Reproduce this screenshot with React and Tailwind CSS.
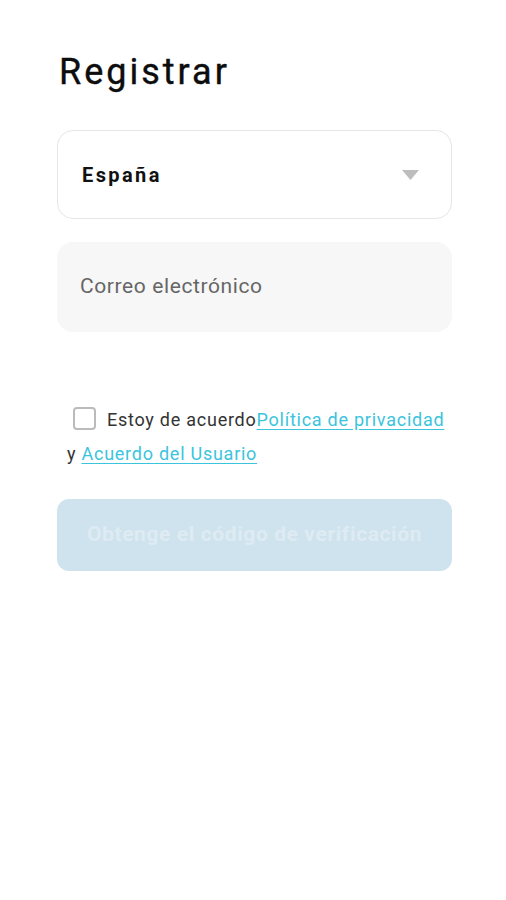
export default function App() {
  return (
    <div className="min-h-[900px] w-[506px] bg-white" style={{ fontFamily: "Roboto, 'Noto Sans', sans-serif" }}>
      <div className="pl-[57px] pr-[54px] pt-[50px]">
        <h1 className="text-[36px] leading-[44px] font-normal tracking-[3px] text-[#0d0d0d] pl-[2px] [-webkit-text-stroke:0.4px_#0d0d0d]">Registrar</h1>
        <div className="mt-[36px] h-[89px] rounded-[16px] border border-[#e6e6e6] flex items-center justify-between pl-[24px] pr-[32px]">
          <span className="text-[20px] font-bold tracking-[2.4px] text-[#111]">España</span>
          <svg width="17" height="10" viewBox="0 0 17 10"><path d="M0 0 H17 L8.5 10 Z" fill="#bdbdbd" /></svg>
        </div>
        <div className="mt-[23px] h-[90px] rounded-[16px] bg-[#f7f7f7] flex items-center pl-[23px]">
          <span className="text-[21px] tracking-[0.6px] text-[#666]">Correo electrónico</span>
        </div>
        <div className="mt-[71px] pl-[10px] text-[18px] leading-[34px] tracking-[0.75px] text-[#333]">
          <span className="inline-block align-middle ml-[6px] mr-[11px] w-[23px] h-[23px] rounded-[4px] border-2 border-[#bbb] relative top-[-3px]"></span>
          <span>Estoy de acuerdo</span>
          <a className="text-[#3bc4dc] underline underline-offset-[3px]">Política de privacidad</a>
          <span> y </span>
          <a className="text-[#3bc4dc] underline underline-offset-[3px]">Acuerdo del Usuario</a>
        </div>
        <div className="mt-[28px] h-[72px] rounded-[12px] bg-[#cfe3ee] flex items-center justify-center">
          <span className="text-[21px] font-bold text-[#deebf3] tracking-[0.6px]">Obtenge el código de verificación</span>
        </div>
      </div>
    </div>
  );
}
